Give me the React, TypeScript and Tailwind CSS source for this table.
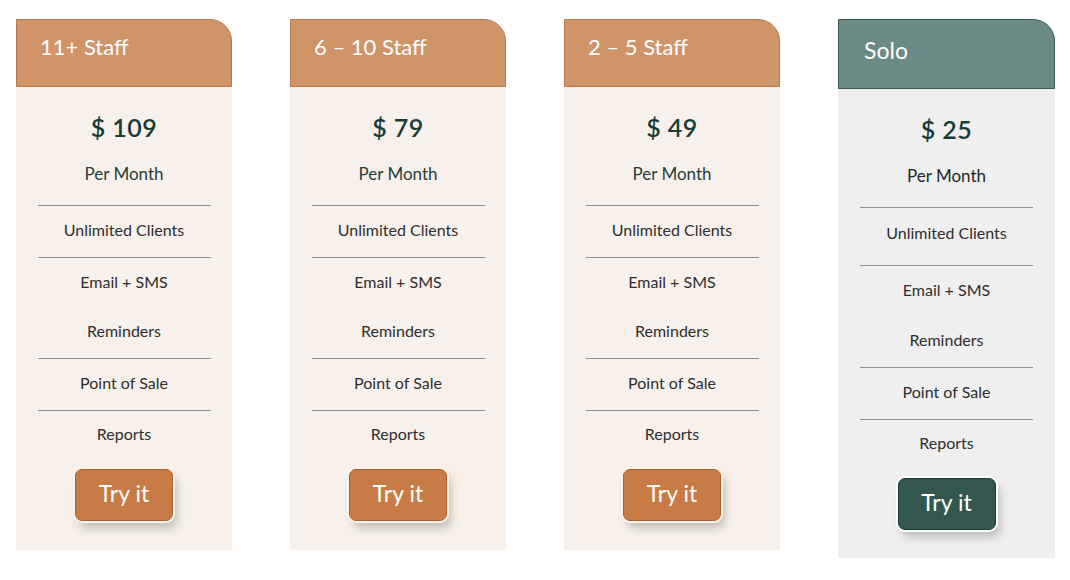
import React from "react";

type Plan = {
  title: string;
  price: string;
  solo?: boolean;
};

const plans: Plan[] = [
  { title: "11+ Staff", price: "$ 109" },
  { title: "6 – 10 Staff", price: "$ 79" },
  { title: "2 – 5 Staff", price: "$ 49" },
  { title: "Solo", price: "$ 25", solo: true },
];

function Card({ plan }: { plan: Plan }) {
  const solo = !!plan.solo;
  return (
    <div className={solo ? "flex w-[217px] flex-col" : "flex w-[216px] flex-col"}>
      <div
        className={
          solo
            ? "flex h-[70px] items-center rounded-tr-[22px] border border-[#3b5a54] bg-[#6b8a85] pl-[25px] pb-[8px] text-[23px] text-white"
            : "flex h-[68px] items-center rounded-tr-[22px] border border-[#b8794b] bg-[#cf9468] pl-[23px] pb-[14px] text-[22px] text-white"
        }
      >
        {plan.title}
      </div>
      <div
        className={
          solo
            ? "flex h-[469px] flex-col items-center bg-[#eeefee]"
            : "flex h-[463px] flex-col items-center bg-[#f8f1eb]"
        }
      >
        <div
          className={
            solo
              ? "mt-[25px] text-[25px] font-semibold leading-[30px] tracking-[0.5px] text-[#183c36]"
              : "mt-[25px] text-[25px] font-semibold leading-[30px] tracking-[0.5px] text-[#183c36]"
          }
        >
          {plan.price}
        </div>
        <div
          className={
            solo
              ? "mt-[22px] text-[17px] leading-[20px] text-[#1a2a28]"
              : "mt-[22px] text-[17px] leading-[20px] text-[#1f3f3a]"
          }
        >
          Per Month
        </div>
        <div className="mt-[21px] flex w-[173px] flex-col text-[16px] text-[#2e2e2e]">
          <div
            className={
              solo
                ? "flex h-[58px] items-start justify-center border-t border-[#8f928c] pt-[13px]"
                : "flex h-[52px] items-center justify-center border-t border-[#8f928c] pb-[4px]"
            }
          >
            Unlimited Clients
          </div>
          <div
            className={
              solo
                ? "flex h-[51px] items-center justify-center border-t border-[#8f928c] pb-[2px]"
                : "flex h-[50px] items-center justify-center border-t border-[#8f928c] pb-[2px]"
            }
          >
            Email + SMS
          </div>
          <div
            className={
              solo
                ? "flex h-[51px] items-center justify-center pb-[4px]"
                : "flex h-[51px] items-center justify-center pb-[3px]"
            }
          >
            Reminders
          </div>
          <div className="flex h-[52px] items-center justify-center border-t border-[#8f928c] pb-[3px]">
            Point of Sale
          </div>
          <div className="flex h-[48px] items-center justify-center border-t border-[#8f928c] pb-[2px]">
            Reports
          </div>
        </div>
        <button
          className={
            solo
              ? "mt-[11px] flex h-[52px] w-[98px] items-center justify-center rounded-[7px] border border-[#1f3d37] bg-[#33574f] pb-[3px] text-[23px] text-white shadow-[0_0_0_2px_#ffffff,4px_7px_10px_rgba(0,0,0,0.22)]"
              : "mt-[11px] flex h-[52px] w-[98px] items-center justify-center rounded-[7px] border border-[#a9622f] bg-[#c87b45] pb-[3px] text-[23px] text-white shadow-[0_0_0_2px_#fbf3ea,4px_7px_10px_rgba(0,0,0,0.22)]"
          }
        >
          Try it
        </button>
      </div>
    </div>
  );
}

export default function App() {
  return (
    <div
      className="flex h-[580px] w-[1070px] items-start gap-[58px] bg-white pl-[16px] pt-[19px]"
      style={{ fontFamily: "Lato, 'Noto Sans', sans-serif" }}
    >
      {plans.map((p) => (
        <Card key={p.title} plan={p} />
      ))}
    </div>
  );
}
